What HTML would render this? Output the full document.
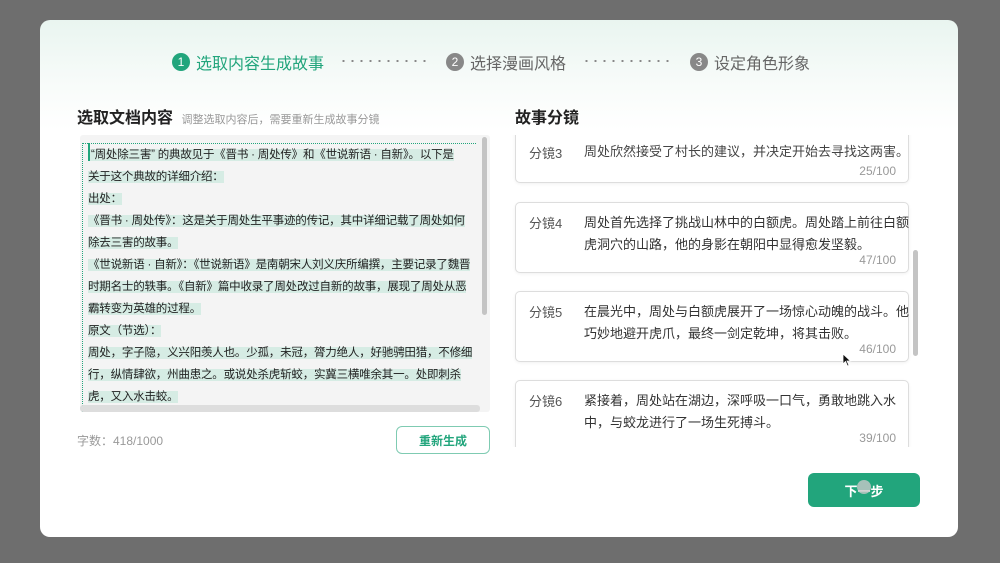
<!DOCTYPE html>
<html><head><meta charset="utf-8"><style>
*{margin:0;padding:0;box-sizing:border-box}
body{width:1000px;height:563px;background:#6e6e6e;font-family:"Liberation Sans","Noto Sans CJK SC",sans-serif;position:relative;overflow:hidden}
.modal{position:absolute;left:40px;top:20px;width:918px;height:517px;border-radius:10px;background:linear-gradient(180deg,#e9f5f0 0,#f7fbf9 60px,#fff 110px);overflow:hidden}
.abs{position:absolute}
.step{font-size:16px;color:#666;display:flex;align-items:center;top:30px;position:absolute}
.num{width:18px;height:18px;border-radius:50%;background:#888;color:#fff;font-size:12px;display:inline-flex;align-items:center;justify-content:center;margin-right:6px}
.dots{position:absolute;top:40px;height:2px;background:radial-gradient(circle,#888 1px,transparent 1.3px) 0 0/9px 2px repeat-x}
.box{left:40px;top:115px;width:410px;height:277px;background:#f4f4f4;border-radius:3px;overflow:hidden}
.box p{font-size:11.5px;color:#222;line-height:22px;margin-left:8px;white-space:nowrap;letter-spacing:-0.2px}
.box span{background:#d6ece4}
.card{position:absolute;left:475px;width:394px;background:#fff;border:1px solid #ddd;border-radius:5px;box-shadow:0 1px 3px rgba(0,0,0,.06)}
.card .l{position:absolute;left:13px;color:#555;font-size:13px}
.card .t{position:absolute;left:68px;width:330px;font-size:13px;line-height:22px;color:#333}
.card .c{position:absolute;right:12px;font-size:12px;color:#999}
</style></head><body>
<div class="modal">
 <div class="step" style="left:132px;color:#22a57c"><span class="num" style="background:#22a57c">1</span>选取内容生成故事</div>
 <div class="dots" style="left:299px;width:92px"></div>
 <div class="step" style="left:406px"><span class="num">2</span>选择漫画风格</div>
 <div class="dots" style="left:542px;width:92px"></div>
 <div class="step" style="left:650px"><span class="num">3</span>设定角色形象</div>

 <div class="abs" style="left:37px;top:84px;font-size:16px;font-weight:bold;color:#222">选取文档内容 <span style="font-size:11px;font-weight:normal;color:#999;margin-left:4px">调整选取内容后，需要重新生成故事分镜</span></div>
 <div class="abs box">
  <div class="abs" style="left:2px;top:8px;bottom:0;border-left:1px dotted #22a57c"></div>
  <div class="abs" style="left:2px;top:8px;right:14px;border-top:1px dotted #22a57c"></div>
  <div class="abs" style="left:8px;top:8px;width:2px;height:18px;background:#22a57c"></div>
  <div style="padding-top:9px">
  <p><span>&nbsp;“周处除三害” 的典故见于《晋书 · 周处传》和《世说新语 · 自新》。以下是</span></p>
  <p><span>关于这个典故的详细介绍：</span></p>
  <p><span>出处：</span></p>
  <p><span>《晋书 · 周处传》：这是关于周处生平事迹的传记，其中详细记载了周处如何</span></p>
  <p><span>除去三害的故事。</span></p>
  <p><span>《世说新语 · 自新》：《世说新语》是南朝宋人刘义庆所编撰，主要记录了魏晋</span></p>
  <p><span>时期名士的轶事。《自新》篇中收录了周处改过自新的故事，展现了周处从恶</span></p>
  <p><span>霸转变为英雄的过程。</span></p>
  <p><span>原文（节选）：</span></p>
  <p><span>周处，字子隐，义兴阳羡人也。少孤，未冠，膂力绝人，好驰骋田猎，不修细</span></p>
  <p><span>行，纵情肆欲，州曲患之。或说处杀虎斩蛟，实冀三横唯余其一。处即刺杀</span></p>
  <p><span>虎，又入水击蛟。</span></p>
  </div>
  <div class="abs" style="right:3px;top:2px;width:5px;height:178px;background:#c4c4c4;border-radius:3px"></div>
  <div class="abs" style="left:0;right:10px;bottom:0;height:7px;background:#ddd;border-radius:3px"></div>
 </div>
 <div class="abs" style="left:37px;top:412px;font-size:12px;color:#999">字数：418/1000</div>
 <div class="abs" style="left:356px;top:406px;width:94px;height:28px;border:1px solid #7fcbb2;border-radius:6px;color:#22a57c;font-size:12px;font-weight:bold;display:flex;align-items:center;justify-content:center">重新生成</div>

 <div class="abs" style="left:475px;top:84px;font-size:16px;font-weight:bold;color:#222">故事分镜</div>
 <div class="abs" style="left:470px;top:115px;width:415px;height:312px;overflow:hidden">
  <div class="card" style="left:5px;top:-20px;height:68px"><span class="l" style="top:27px">分镜3</span><span class="t" style="top:25px;color:#444;white-space:nowrap">周处欣然接受了村长的建议，并决定开始去寻找这两害。</span><span class="c" style="top:48px">25/100</span></div>
  <div class="card" style="left:5px;top:67px;height:71px"><span class="l" style="top:10px">分镜4</span><span class="t" style="top:9px">周处首先选择了挑战山林中的白额虎。周处踏上前往白额虎洞穴的山路，他的身影在朝阳中显得愈发坚毅。</span><span class="c" style="top:50px">47/100</span></div>
  <div class="card" style="left:5px;top:156px;height:71px"><span class="l" style="top:10px">分镜5</span><span class="t" style="top:9px">在晨光中，周处与白额虎展开了一场惊心动魄的战斗。他巧妙地避开虎爪，最终一剑定乾坤，将其击败。</span><span class="c" style="top:50px">46/100</span></div>
  <div class="card" style="left:5px;top:245px;height:71px"><span class="l" style="top:10px">分镜6</span><span class="t" style="top:9px">紧接着，周处站在湖边，深呼吸一口气，勇敢地跳入水中，与蛟龙进行了一场生死搏斗。</span><span class="c" style="top:50px">39/100</span></div>
  <div class="abs" style="left:403px;top:115px;width:5px;height:106px;background:#c4c4c4;border-radius:3px"></div>
 </div>

 <div class="abs" style="left:768px;top:453px;width:112px;height:34px;background:#22a57c;border-radius:6px;color:#fff;font-size:13px;font-weight:bold;display:flex;align-items:center;justify-content:center">下一步</div>
 <div class="abs" style="left:817px;top:460px;width:14px;height:14px;border-radius:50%;background:rgba(200,200,200,.8)"></div>
 <svg class="abs" style="left:802px;top:333px" width="10" height="14" viewBox="0 0 10 14"><path d="M1 1 L1 11 L3.5 8.5 L5.5 13 L7 12.3 L5 8 L8.5 8 Z" fill="#111" stroke="#fff" stroke-width="0.8"/></svg>
</div>
</body></html>
